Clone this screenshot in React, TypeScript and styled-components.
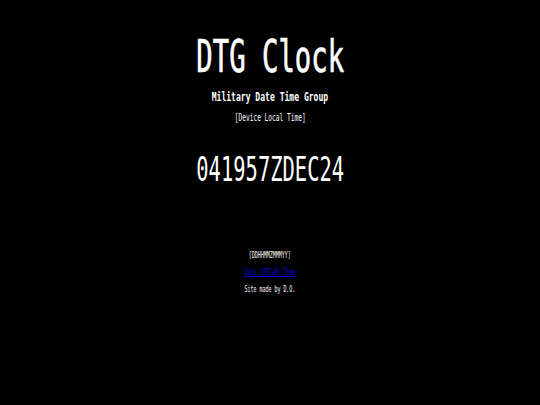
import styled, { createGlobalStyle } from "styled-components"

const Global = createGlobalStyle`
  *, *::before, *::after {
    box-sizing: border-box;
  }
  html, body {
    margin: 0;
    padding: 0;
    background: #000;
  }
  body {
    font-family: "DejaVu Sans Mono", monospace;
    color: #fff;
  }
`

const Page = styled.div`
  width: 100%;
  height: 405px;
  overflow: hidden;
  background: #000;
  display: flex;
  flex-direction: column;
  align-items: center;
  padding-top: 35px;
`

const Squeeze = styled.div<{ size: number; gap: number; bold?: boolean; stroke?: number }>`
  font-size: ${p => p.size}px;
  line-height: 1;
  font-weight: ${p => (p.bold ? 700 : 400)};
  margin-bottom: ${p => p.gap}px;
  transform: scaleX(0.62);
  white-space: nowrap;
  -webkit-text-stroke: ${p => p.stroke ?? 0}px #fff;
`

const Link = styled.a`
  color: #0000ee;
  text-decoration: underline;
`

export default function App() {
  return (
    <>
      <Global />
      <Page>
        <Squeeze size={44} gap={11} stroke={0.7}>DTG Clock</Squeeze>
        <Squeeze size={13} gap={10} bold>Military Date Time Group</Squeeze>
        <Squeeze size={10} gap={30}>[Device Local Time]</Squeeze>
        <Squeeze size={33} gap={66}>041957ZDEC24</Squeeze>
        <Squeeze size={8} gap={9}>[DDHHMMZMMMYY]</Squeeze>
        <Squeeze size={8} gap={9}>
          <Link href="#">Zulu (UTC+0) Time</Link>
        </Squeeze>
        <Squeeze size={8} gap={0}>Site made by D.O.</Squeeze>
      </Page>
    </>
  )
}
